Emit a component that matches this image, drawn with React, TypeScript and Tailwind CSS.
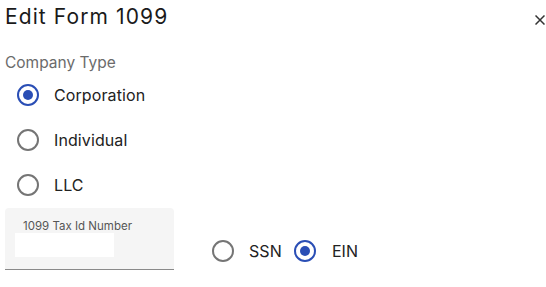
import { useState } from "react";

type RadioProps = {
  checked: boolean;
  label: string;
  onChange: () => void;
};

function Radio({ checked, label, onChange }: RadioProps) {
  return (
    <label className="flex items-center cursor-pointer" onClick={onChange}>
      <span className="w-[45px] h-[45px] flex items-center justify-center shrink-0">
        <span
          className={
            checked
              ? "w-[22px] h-[22px] rounded-full border-2 border-[#2a4eb5] flex items-center justify-center"
              : "w-[22px] h-[22px] rounded-full border-2 border-[#757575]"
          }
        >
          {checked && <span className="w-[10px] h-[10px] rounded-full bg-[#2a4eb5]" />}
        </span>
      </span>
      <span className="ml-[4px] text-[16px] text-[#222] tracking-[0.1px]">{label}</span>
    </label>
  );
}

export default function App() {
  const [companyType, setCompanyType] = useState("Corporation");
  const [idType, setIdType] = useState("EIN");

  return (
    <div
      className="w-[546px] h-[287px] bg-white relative overflow-hidden"
      style={{ fontFamily: "Inter, 'Noto Sans', sans-serif" }}
    >
      <div className="flex items-start justify-between pl-[5px] pt-[3px]">
        <h2 className="text-[21px] leading-[28px] tracking-[1.1px] text-[#1a1a1a] font-normal">Edit Form 1099</h2>
        <button className="mr-[1px] mt-[12px] w-[10px] h-[10px] text-[#333]" title="Close">
          <svg viewBox="0 0 10 10" width="10" height="10">
            <path d="M0.5 0.5 L9.5 9.5 M9.5 0.5 L0.5 9.5" stroke="currentColor" strokeWidth="1.5" />
          </svg>
        </button>
      </div>

      <div className="pl-[5px] mt-[22px]">
        <p className="text-[15.5px] leading-[20px] text-[#6b6b6b]">Company Type</p>
        <div className="flex flex-col -mt-[1px]">
          {["Corporation", "Individual", "LLC"].map((t) => (
            <Radio key={t} label={t} checked={companyType === t} onChange={() => setCompanyType(t)} />
          ))}
        </div>
      </div>

      <div className="flex items-start pl-[5px] mt-[1px]">
        <div className="w-[169px] h-[62px] bg-[#f5f5f5] rounded-t-[4px] border-b border-[#8a8a8a] pt-[11px] pl-[10px]">
          <p className="text-[11.5px] leading-[14px] text-[#555] ml-[8px]">1099 Tax Id Number</p>
          <input className="mt-[0px] w-[99px] h-[24px] bg-white outline-none" />
        </div>
        <div className="flex items-center ml-[26px] mt-[20px]">
          <Radio label="SSN" checked={idType === "SSN"} onChange={() => setIdType("SSN")} />
          <div className="ml-[1px]">
            <Radio label="EIN" checked={idType === "EIN"} onChange={() => setIdType("EIN")} />
          </div>
        </div>
      </div>
    </div>
  );
}
